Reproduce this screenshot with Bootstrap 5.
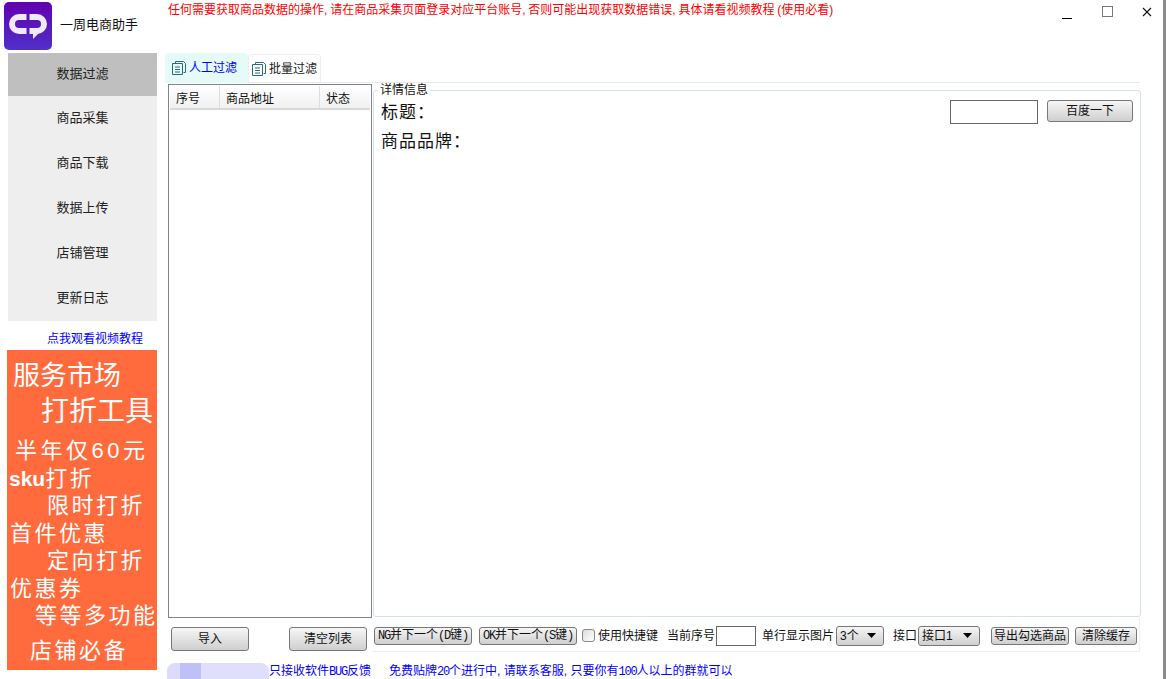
<!DOCTYPE html>
<html lang="zh-CN">
<head>
<meta charset="utf-8">
<meta name="viewport" content="width=device-width, initial-scale=1.0">
<link href="https://cdn.jsdelivr.net/npm/bootstrap@5.3.1/dist/css/bootstrap.min.css" rel="stylesheet">
<title>一周电商助手</title>
<style>
body { width: 1166px; height: 679px; overflow: hidden; background: #fff; color: #111; font-family: "Liberation Sans", "Noto Sans CJK SC", sans-serif; font-size: 12px; border-right: 3px solid #8a8a8a; white-space: nowrap; }
.lat { font-family: "Liberation Mono", monospace; font-size: 12px; letter-spacing: -1.2px; }
.app-top { height: 53px; }
.logo-box { width: 48px; height: 48px; margin: 2px 0 0 4px; border-radius: 5px; background: linear-gradient(#6200b0, #5030c8); }
.logo-box svg { display: block; }
.app-name { font-size: 13px; margin: 15px 0 0 8px; width: 108px; }
.notice { color: #f00; line-height: 18px; padding-top: 1px; width: 891px; word-spacing: -.5px; }
.win-btns { padding-top: 6px; }
.win-min { margin-left: 3px; margin-top: 3px; display: block; }
.win-max { margin-left: 30px; display: block; }
.win-cls { margin-left: 29px; margin-top: 1px; display: block; }
.side { width: 165px; padding-left: 8px; }
.side-item { width: 149px; height: 45px; background: #eee; line-height: 44px; text-align: center; color: #222; font-size: 13px; }
.side-item.on { height: 43px; line-height: 42px; background: #bfbfbf; }
.side-link { width: 135px; height: 29px; color: #00f; text-align: right; line-height: 36px; text-decoration: none; display: block; }
.promo { width: 150px; height: 320px; margin-left: -1px; background: #ff6b3d; color: #fff; overflow: hidden; }
.p1 { font-size: 27px; line-height: 36px; }
.p1-a { padding: 8px 0 0 6px; }
.p1-b { padding-left: 34px; font-size: 28px; }
.p2 { font-size: 22px; line-height: 27.5px; letter-spacing: 2.5px; }
.p2-a { padding-left: 8px; margin-top: 7px; letter-spacing: 3.5px; }
.p2-b { padding-left: 2px; }
.p2-c { padding-left: 40px; }
.p2-d { padding-left: 3px; }
.p2-e { padding-left: 28px; }
.p2-f { padding-left: 23px; margin-top: 7px; }
.promo b { font-size: 21px; letter-spacing: 0; }
.tabs-bar { height: 30px; border-bottom: 1px solid #e8e8e8; width: 975px; margin-bottom: 1px; }
.tab-one { display: flex; align-items: center; gap: 3px; }
.tab-a { width: 83px; height: 30px; padding-left: 7px; background: #e4fbf7; color: #00f; border-radius: 4px 4px 0 0; }
.tab-b { width: 73px; height: 28px; margin-top: 1px; padding-left: 3px; border: 1px solid #eee; border-bottom: 0; border-radius: 4px 4px 0 0; color: #222; }
.work { height: 534px; }
.list-box { width: 204px; margin-left: 3px; border: 1px solid #7c8490; background: #fff; }
.list-head { height: 24px; margin: 1px 1px 0; background: linear-gradient(#fff, #f0f0f0); border-bottom: 2px solid #d8d8d8; line-height: 26px; }
.list-head span { display: block; padding-left: 6px; border-right: 1px solid #ddd; height: 22px; }
.col-no { width: 50px; }
.col-url { width: 100px; }
.col-st { width: 50px; border-right: 0 !important; }
.detail { width: 768px; height: 527px; margin: 6px 0 0 1px; border: 1px solid #d4e0ec; border-radius: 3px; position: relative; padding: 7px 7px 0 7px; }
.detail-legend { position: absolute; left: 4px; top: -8px; background: #fff; padding: 0 2px; line-height: 14px; }
.big-label { font-size: 17px; line-height: 29px; letter-spacing: 1px; }
.plain-in { border: 1px solid #666; background: #fff; border-radius: 0; padding: 0; }
.in-search { width: 88px; height: 24px; margin-top: 2px; }
.in-no { width: 40px; height: 20px; }
.win-btn { border: 1px solid #777; border-radius: 3px; background: linear-gradient(#f6f6f6, #cfcfcf); color: #111; font-size: 12px; padding: 0; line-height: 1; }
.win-btn:hover { border-color: #777; color: #111; }
.btn-search { width: 86px; height: 22px; margin: 2px 0 0 9px; }
.btn-list { width: 78px; height: 24px; }
.btn-key { width: 98px; height: 18px; }
.btn-out { width: 78px; height: 18px; }
.btn-clear { width: 62px; height: 18px; }
.win-sel { border: 1px solid #777; border-radius: 3px; font-size: 12px; height: 20px; padding: 0 0 0 3px; color: #111; background: url("data:image/svg+xml,%3Csvg xmlns='http://www.w3.org/2000/svg' width='10' height='5'%3E%3Cpath d='M0 0h9L4.5 5z' fill='%23000'/%3E%3C/svg%3E") no-repeat right 6px center, linear-gradient(#f6f6f6, #cfcfcf); }
.sel-3 { width: 48px; }
.sel-if { width: 62px; }
.tools { height: 35px; width: 975px; padding-left: 6px; }
.tools-l { width: 196px; padding-top: 9px; }
.tools-r { border: 1px solid #eee; border-top: 0; border-left: 0; height: 34px; margin-left: 5px; width: 768px; padding: 2px 0 0 2px; }
.chk { width: 13px; height: 13px; margin: 0 3px 0 5px; border: 1px solid #888; border-radius: 0; background: linear-gradient(135deg, #ddd, #fff); flex-shrink: 0; }
.gap-a { margin-left: 7px; }
.gap-b { margin-left: 9px; }
.gap-c { margin-left: 6px; }
.gap-d { margin-left: 2px; }
.gap-e { margin-left: 1px; }
.gap-f { margin-left: 11px; }
.gap-g { margin-left: 1px; }
.status-bar { height: 27px; color: #00f; padding-top: 9px; }
.blur-pill { width: 102px; height: 16px; margin: 1px 0 0 2px; border-radius: 8px 8px 0 0; background: linear-gradient(90deg, #dcdcfa 13%, #c0c0f8 13%, #c0c0f8 33%, #dfdffb 33%); }
.free-text { margin-left: 18px; }
</style>
</head>
<body>
<div class="d-flex app-top">
  <div class="logo-box flex-shrink-0">
    <svg width="48" height="48" viewBox="0 0 48 48" fill="none" stroke="#efeafb" stroke-width="6">
      <path d="M22.500 15H15a7 7 0 0 0 0 14h7.500"/>
      <path d="M25.500 15H33a7 7 0 0 1 0 14h-7.500"/>
      <path d="M29 30h7l-7 7z" fill="#efeafb" stroke="none"/>
    </svg>
  </div>
  <div class="app-name flex-shrink-0">一周电商助手</div>
  <div class="notice flex-shrink-0">任何需要获取商品数据的操作, 请在商品采集页面登录对应平台账号, 否则可能出现获取数据错误, 具体请看视频教程 (使用必看)</div>
  <div class="win-btns d-flex align-items-start flex-shrink-0">
    <svg class="win-min" width="10" height="10" viewBox="0 0 10 10"><path d="M0 9.500h10" stroke="#000"/></svg>
    <svg class="win-max" width="11" height="11" viewBox="0 0 11 11"><rect x=".5" y=".5" width="10" height="10" fill="none" stroke="#777"/></svg>
    <svg class="win-cls" width="10" height="10" viewBox="0 0 10 10"><path d="M1 1l8 8M9 1l-8 8" stroke="#111" stroke-width="1.100"/></svg>
  </div>
</div>
<div class="d-flex">
  <div class="side flex-shrink-0">
    <div class="side-item on">数据过滤</div>
    <div class="side-item">商品采集</div>
    <div class="side-item">商品下载</div>
    <div class="side-item">数据上传</div>
    <div class="side-item">店铺管理</div>
    <div class="side-item">更新日志</div>
    <a class="side-link" href="#">点我观看视频教程</a>
    <div class="promo">
      <div class="p1 p1-a">服务市场</div>
      <div class="p1 p1-b">打折工具</div>
      <div class="p2 p2-a">半年仅60元</div>
      <div class="p2 p2-b"><b>sku</b>打折</div>
      <div class="p2 p2-c">限时打折</div>
      <div class="p2 p2-d">首件优惠</div>
      <div class="p2 p2-c">定向打折</div>
      <div class="p2 p2-d">优惠券</div>
      <div class="p2 p2-e">等等多功能</div>
      <div class="p2 p2-f">店铺必备</div>
    </div>
  </div>
  <div class="flex-grow-1">
    <div class="tabs-bar d-flex">
      <div class="tab-one tab-a">
        <svg width="14" height="14" viewBox="0 0 14 14" fill="none" stroke="#2a6a80"><path d="M3.500 2.500V.5h8l2 2v9h-2"/><path d="M.5 2.500h10v11H.5z"/><path d="M3 6h5M3 8.500h5M3 11h5"/></svg>
        <span>人工过滤</span>
      </div>
      <div class="tab-one tab-b">
        <svg width="14" height="14" viewBox="0 0 14 14" fill="none" stroke="#2a6a80"><path d="M3.500 2.500V.5h8l2 2v9h-2"/><path d="M.5 2.500h10v11H.5z"/><path d="M3 6h5M3 8.500h5M3 11h5"/></svg>
        <span>批量过滤</span>
      </div>
    </div>
    <div class="d-flex work">
      <div class="list-box">
        <div class="list-head d-flex">
          <span class="col-no">序号</span>
          <span class="col-url">商品地址</span>
          <span class="col-st">状态</span>
        </div>
      </div>
      <div class="detail">
        <div class="detail-legend">详情信息</div>
        <div class="d-flex justify-content-between">
          <div class="big-label">标题：</div>
          <div class="d-flex align-items-start">
            <input class="plain-in in-search" type="text">
            <button class="btn win-btn btn-search" type="button">百度一下</button>
          </div>
        </div>
        <div class="big-label">商品品牌：</div>
      </div>
    </div>
    <div class="d-flex tools">
      <div class="tools-l d-flex justify-content-between align-items-start flex-shrink-0">
        <button class="btn win-btn btn-list" type="button">导入</button>
        <button class="btn win-btn btn-list" type="button">清空列表</button>
      </div>
      <div class="tools-r d-flex align-items-center">
        <button class="btn win-btn btn-key" type="button"><span class="lat">NG</span>并下一个<span class="lat">(D</span>键<span class="lat">)</span></button>
        <button class="btn win-btn btn-key gap-a" type="button"><span class="lat">OK</span>并下一个<span class="lat">(S</span>键<span class="lat">)</span></button>
        <input class="form-check-input chk" type="checkbox">
        <span>使用快捷键</span>
        <span class="gap-b">当前序号</span>
        <input class="plain-in in-no gap-g" type="text">
        <span class="gap-c">单行显示图片</span>
        <select class="form-select win-sel sel-3 gap-d"><option>3个</option></select>
        <span class="gap-b">接口</span>
        <select class="form-select win-sel sel-if gap-e"><option>接口1</option></select>
        <button class="btn win-btn btn-out gap-f" type="button">导出勾选商品</button>
        <button class="btn win-btn btn-clear gap-c" type="button">清除缓存</button>
      </div>
    </div>
    <div class="status-bar d-flex">
      <div class="blur-pill"></div>
      <span>只接收软件<span class="lat">BUG</span>反馈</span>
      <span class="free-text">免费贴牌<span class="lat">20</span>个进行中, 请联系客服, 只要你有<span class="lat">100</span>人以上的群就可以</span>
    </div>
  </div>
</div>
</body>
</html>
